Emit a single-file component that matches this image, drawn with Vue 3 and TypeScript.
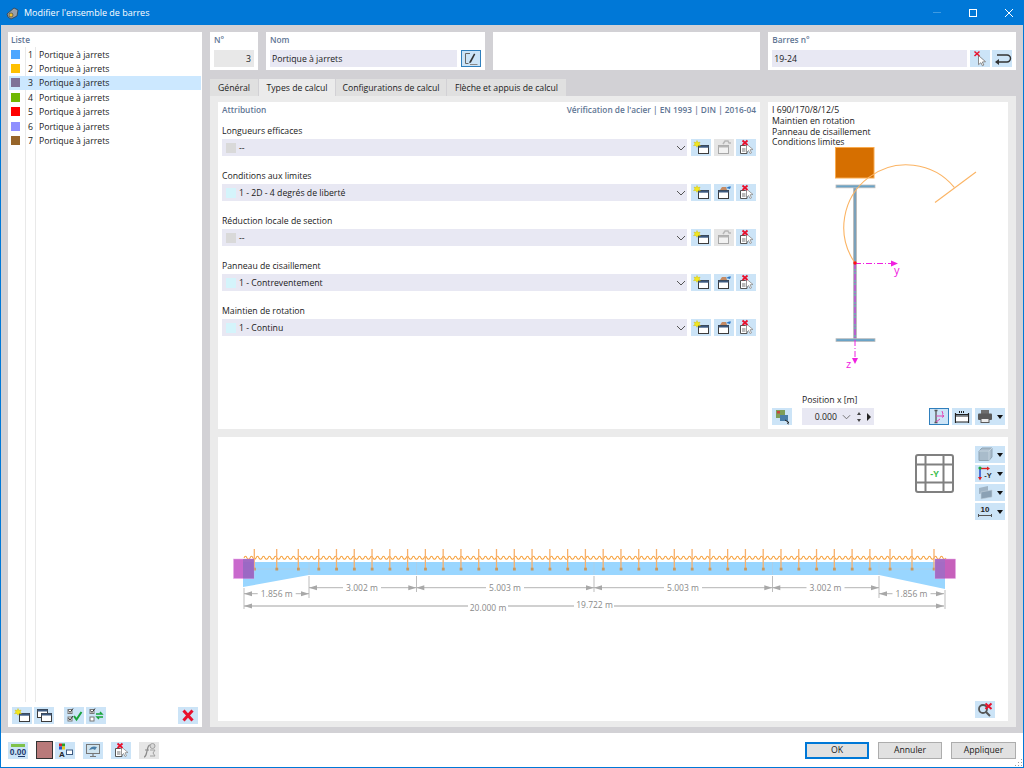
<script setup lang="ts">
// Dialogue RFEM : ensemble de barres
interface AttrRow {
  label: string
  value: string
  empty: boolean
}

const listItems = [
  { id: 1, color: '#4da6ff' },
  { id: 2, color: '#ffc000' },
  { id: 3, color: '#7f7198' },
  { id: 4, color: '#70b800' },
  { id: 5, color: '#ff0000' },
  { id: 6, color: '#8f8fff' },
  { id: 7, color: '#97652a' }
]

const tabs = ['Général', 'Types de calcul', 'Configurations de calcul', 'Flèche et appuis de calcul']

const attrRows: AttrRow[] = [
  { label: 'Longueurs efficaces', value: '--', empty: true },
  { label: 'Conditions aux limites', value: '1 - 2D - 4 degrés de liberté', empty: false },
  { label: 'Réduction locale de section', value: '--', empty: true },
  { label: 'Panneau de cisaillement', value: '1 - Contreventement', empty: false },
  { label: 'Maintien de rotation', value: '1 - Continu', empty: false }
]

// repères verticaux du maintien le long de la barre
const ticks: number[] = [254.3, 276.7, 298.3]
for (let i = 0; i <= 31; i++) ticks.push(318.7 + i * 17.78)
ticks.push(890, 912, 934)

let wave = 'M244 558'
for (let x = 244; x < 942; x += 6) wave += ' q1.5 -3.5 3 0 q1.5 2.6 3 0'

const dims = [
  { x1: 309, x2: 416.3, y: 587.7, t: '3.002 m', tx: 362 },
  { x1: 416.3, x2: 594, y: 587.7, t: '5.003 m', tx: 505 },
  { x1: 594, x2: 772.3, y: 587.7, t: '5.003 m', tx: 683 },
  { x1: 772.3, x2: 879, y: 587.7, t: '3.002 m', tx: 825.5 },
  { x1: 244, x2: 309, y: 593.7, t: '1.856 m', tx: 276.7 },
  { x1: 879, x2: 944, y: 593.7, t: '1.856 m', tx: 911.5 }
]
const plotTools = ['ic-cube', 'ic-axes', 'ic-layers', 'ic-scale']
</script>

<template>
  <div class="win">
    <svg class="sprite" width="0" height="0">
      <defs>
        <symbol id="ic-new" viewBox="0 0 20 17">
          <rect x="7.500" y="6.500" width="10" height="8" fill="#fff" stroke="#3c3c3c" />
          <rect x="7.500" y="6.500" width="10" height="2.200" fill="#3d5a80" />
          <path d="M6 1.500l.9 2.100 2.200-.5-1 1.900 1.400 1.700-2.200-.3L6 8.300 4.800 6.400l-2.300.3 1.500-1.700-1-1.900 2.200.5z" fill="#f4e81c" stroke="#cdb900" stroke-width=".4" />
        </symbol>
        <symbol id="ic-copy-off" viewBox="0 0 20 17">
          <rect x="4.500" y="6.500" width="10" height="8" fill="#f2f2f2" stroke="#a8a8a8" />
          <rect x="4.500" y="6.500" width="10" height="2" fill="#b5b5b5" />
          <path d="M9 5l2-3h3l1 2h2" fill="none" stroke="#b8b8b8" stroke-width="1.500" />
        </symbol>
        <symbol id="ic-copy-on" viewBox="0 0 20 17">
          <rect x="4.500" y="6.500" width="10" height="8" fill="#fff" stroke="#3c3c3c" />
          <rect x="4.500" y="6.500" width="10" height="2" fill="#3d5a80" />
          <path d="M6 6l2-3h4l1 3z" fill="#c58a63" />
          <path d="M12 4l3-1.500 2 0-1 2.500z" fill="#2f78c4" />
        </symbol>
        <symbol id="ic-del" viewBox="0 0 20 17">
          <path d="M4.500 6.500h5l1.500 1.500v6.500H4.500z" fill="#fff" stroke="#555" />
          <path d="M6 10h3.500M6 12h3.500" stroke="#777" />
          <path d="M10.500 5l6.500 5.500-3 .3 1.500 3-1.500.7-1.500-3-2 2z" fill="#fff" stroke="#8a8a8a" stroke-width=".8" />
          <path d="M6.500 1.500l5 4.500M11.500 1.500l-5 4.500" stroke="#e8112d" stroke-width="1.800" />
        </symbol>
        <symbol id="ic-edit" viewBox="0 0 20 17">
          <path d="M9 3.500H4.500v10h3" fill="none" stroke="#666" />
          <path d="M8.500 11.500L13 3.500l1.300.8-4.300 8.200-1.700.8z" fill="#333" />
          <path d="M9 14.500h7.500" stroke="#888" />
        </symbol>
        <symbol id="ic-pick" viewBox="0 0 20 17">
          <path d="M8.500 5.500l7 6.200-3.200.3 1.600 3-1.500.7-1.500-3-2.400 2z" fill="#fff" stroke="#7d7d7d" stroke-width=".9" />
          <path d="M4.500 1.500l5 4.500M9.500 1.500l-5 4.500" stroke="#e8112d" stroke-width="1.500" />
        </symbol>
        <symbol id="ic-return" viewBox="0 0 20 17">
          <path d="M6 12h9a3.500 3.500 0 0 0 0-7H5" fill="none" stroke="#333" stroke-width="1.400" />
          <path d="M7 9l-4 3 4 3z" fill="#333" />
        </symbol>
        <symbol id="ic-copy2" viewBox="0 0 20 17">
          <rect x="3.500" y="2.500" width="10" height="8" fill="#fff" stroke="#3c3c3c" />
          <rect x="3.500" y="2.500" width="10" height="2" fill="#3d5a80" />
          <rect x="7.500" y="6.500" width="10" height="8" fill="#fff" stroke="#3c3c3c" />
          <rect x="7.500" y="6.500" width="10" height="2" fill="#3d5a80" />
        </symbol>
        <symbol id="ic-check" viewBox="0 0 20 17">
          <rect x="4" y="2.500" width="4" height="4" fill="#fff" stroke="#777" />
          <rect x="4" y="10" width="4" height="4" fill="#fff" stroke="#777" />
          <path d="M4.500 3.500l1.500 2 3-4M4.500 11l1.500 2 3-4" fill="none" stroke="#333" />
          <path d="M10 9l2.500 3.500L17.500 5" fill="none" stroke="#19a33b" stroke-width="2" />
        </symbol>
        <symbol id="ic-swap" viewBox="0 0 20 17">
          <rect x="4" y="2.500" width="4" height="4" fill="#fff" stroke="#777" />
          <rect x="4" y="10" width="4" height="4" fill="#fff" stroke="#777" />
          <path d="M4.500 3.500l1.500 2 3-4" fill="none" stroke="#333" />
          <path d="M10 7h6l-2-2M17 10h-6l2 2" fill="none" stroke="#19a33b" stroke-width="1.400" />
        </symbol>
        <symbol id="ic-x" viewBox="0 0 20 17">
          <path d="M5.500 3.500l9 10M14.500 3.500l-9 10" stroke="#e8112d" stroke-width="3" />
        </symbol>
        <symbol id="ic-units" viewBox="0 0 20 17">
          <rect x="3" y="2" width="14" height="3" fill="#7fc24a" />
          <text x="10" y="13" font-size="8.500" font-family="Liberation Sans, sans-serif" text-anchor="middle" fill="#1f3a6e" font-weight="700">0.00</text>
          <path d="M10 14.500h7" stroke="#1f3a6e" />
        </symbol>
        <symbol id="ic-legend" viewBox="0 0 20 17">
          <rect x="4" y="1.500" width="3" height="3" fill="#e02020" />
          <rect x="7" y="1.500" width="3" height="3" fill="#2aa02a" />
          <rect x="4" y="4.500" width="3" height="3" fill="#2050d0" />
          <rect x="7" y="4.500" width="3" height="3" fill="#e8c820" />
          <text x="7" y="15" font-size="8" font-family="Liberation Sans, sans-serif" text-anchor="middle" fill="#222" font-weight="700">A</text>
          <rect x="11.500" y="8" width="6" height="4.500" fill="#fff" stroke="#3d5a80" />
        </symbol>
        <symbol id="ic-screen" viewBox="0 0 20 17">
          <rect x="3.500" y="2.500" width="13" height="9" fill="#cfe3ee" stroke="#777" />
          <path d="M6 8c2-4 5-4 8-3l-2 3-2-1z" fill="#4a7ea8" />
          <path d="M7 14.500h6M10 11.500v3" stroke="#777" stroke-width="1.200" />
        </symbol>
        <symbol id="ic-fx" viewBox="0 0 20 17">
          <path d="M5 15c2 0 2-2 3-6s1-6 3-6" fill="none" stroke="#8a8a8a" stroke-width="1.200" />
          <path d="M6 8h4" stroke="#8a8a8a" />
          <circle cx="13.500" cy="4" r="2.500" fill="#d8d8d8" stroke="#a0a0a0" />
          <path d="M11 8h5l-2 3 2 3h-5" fill="none" stroke="#a0a0a0" />
        </symbol>
        <symbol id="ic-model" viewBox="0 0 20 17">
          <rect x="4" y="2" width="9" height="8" fill="#7e9e58" />
          <rect x="5" y="3" width="3" height="2.500" fill="#c9473b" />
          <rect x="8" y="7" width="8" height="6" fill="#4a7ea8" />
          <path d="M13 12l4 2.500-1.500.4.800 1.400" fill="none" stroke="#222" />
        </symbol>
        <symbol id="ic-section" viewBox="0 0 20 17">
          <path d="M5.500 2.500h3M7 2.500v12M5.500 14.500h3" stroke="#555" stroke-width="1.300" fill="none" />
          <path d="M7 8h8M15 8l-2-1.500M15 8l-2 1.500M13 3l1 3M7 14l4-3" stroke="#e243b4" fill="none" />
        </symbol>
        <symbol id="ic-dim" viewBox="0 0 20 17">
          <path d="M3.500 15V5M16.500 15V5M3.500 6.500h13" stroke="#222" stroke-width="1.200" fill="none" />
          <rect x="3.500" y="8" width="13" height="6" fill="#fff" stroke="#222" />
          <path d="M7 4h6" stroke="#222" stroke-width="2" stroke-dasharray="1 1" />
        </symbol>
        <symbol id="ic-print" viewBox="0 0 20 17">
          <rect x="6" y="2" width="8" height="4" fill="#6e6e6e" />
          <rect x="3" y="5.500" width="14" height="6.500" rx="1" fill="#5a5a5a" />
          <rect x="6" y="10.500" width="8" height="4" fill="#ececec" stroke="#5a5a5a" />
        </symbol>
        <symbol id="ic-cube" viewBox="0 0 20 17">
          <path d="M4 5l3-3h10v9l-3 3.500H4z" fill="#a9bccb" stroke="#8fa3b3" />
          <path d="M4 5h10v9.500M14 5l3-3" fill="none" stroke="#c6d5e0" />
        </symbol>
        <symbol id="ic-axes" viewBox="0 0 20 17">
          <path d="M5 3.500h7" stroke="#e02020" stroke-width="1.400" />
          <path d="M5 3.500v9" stroke="#1a40c8" stroke-width="1.400" />
          <circle cx="5" cy="3" r="1.600" fill="#1da83a" />
          <path d="M12 1.500l3 2-3 2zM3 12h4l-2 3.500z" fill="#e02020" />
          <text x="13" y="13" font-size="7.500" font-family="Liberation Sans, sans-serif" font-weight="700" text-anchor="middle" fill="#333">-Y</text>
        </symbol>
        <symbol id="ic-layers" viewBox="0 0 20 17">
          <path d="M4 4l9-2v6l-9 2z" fill="#9fb3c4" />
          <path d="M6 8l11-2v7l-11 2z" fill="#8ba1b4" stroke="#c2d0db" stroke-width=".6" />
        </symbol>
        <symbol id="ic-scale" viewBox="0 0 20 17">
          <text x="10" y="9" font-size="8" font-family="Liberation Sans, sans-serif" font-weight="700" text-anchor="middle" fill="#222">10</text>
          <path d="M3.500 14v-3M16.500 14v-3M3.500 12.500h13" stroke="#555" fill="none" />
        </symbol>
        <symbol id="ic-zoom" viewBox="0 0 20 17">
          <circle cx="8" cy="8" r="4" fill="none" stroke="#555" stroke-width="1.800" />
          <path d="M11 11l4 4" stroke="#555" stroke-width="2" />
          <path d="M10.500 2.500l6 5.500M16.500 2.500l-6 5.500" stroke="#e8112d" stroke-width="2" />
        </symbol>
      </defs>
    </svg>

    <header class="titlebar">
      <svg class="app-ico" viewBox="0 0 14 14" width="14" height="14">
        <path d="M1 8l7-6 4 2-1 6-6 3-3-2z" fill="#9aa0a8" stroke="#333" stroke-width=".7" />
        <circle cx="5" cy="9" r="2" fill="#f2c230" stroke="#333" stroke-width=".6" />
      </svg>
      <span class="title">Modifier l'ensemble de barres</span>
      <div class="win-ctrl">
        <svg viewBox="0 0 10 10" width="10" height="10"><path d="M1 4.500h8" stroke="#3f9be2" /></svg>
        <svg viewBox="0 0 10 10" width="10" height="10"><rect x="1.500" y="1.500" width="7" height="7" fill="none" stroke="#fff" /></svg>
        <svg viewBox="0 0 10 10" width="10" height="10"><path d="M1 1l8 8M9 1l-8 8" stroke="#fff" /></svg>
      </div>
    </header>

    <div class="body">
      <aside class="list-panel">
        <div class="head list-head">Liste</div>
        <div class="list">
          <div v-for="item in listItems" :key="item.id" class="list-row" :class="{ sel: item.id === 3 }">
            <span class="swatch" :style="{ background: item.color }"></span>
            <span class="num">{{ item.id }}</span>
            <span class="row-name">Portique à jarrets</span>
          </div>
        </div>
        <div class="list-tools">
          <button class="tb"><svg><use href="#ic-new" /></svg></button>
          <button class="tb"><svg><use href="#ic-copy2" /></svg></button>
          <button class="tb ml"><svg><use href="#ic-check" /></svg></button>
          <button class="tb"><svg><use href="#ic-swap" /></svg></button>
          <button class="tb push"><svg><use href="#ic-x" /></svg></button>
        </div>
      </aside>

      <main class="main">
        <div class="top-row">
          <section class="card c-num">
            <div class="head">N°</div>
            <div class="field grey right">3</div>
          </section>
          <section class="card c-name">
            <div class="head">Nom</div>
            <div class="line">
              <div class="field grow">Portique à jarrets</div>
              <button class="tb active"><svg><use href="#ic-edit" /></svg></button>
            </div>
          </section>
          <section class="card c-blank"></section>
          <section class="card c-bars">
            <div class="head">Barres n°</div>
            <div class="line">
              <div class="field grow">19-24</div>
              <button class="tb"><svg><use href="#ic-pick" /></svg></button>
              <button class="tb"><svg><use href="#ic-return" /></svg></button>
            </div>
          </section>
        </div>

        <nav class="tabs">
          <div v-for="(t, i) in tabs" :key="t" class="tab" :class="{ on: i === 1 }">{{ t }}</div>
        </nav>

        <div class="tab-body">
          <section class="attr">
            <div class="attr-head head">
              <span>Attribution</span>
              <span>Vérification de l'acier | EN 1993 | DIN | 2016-04</span>
            </div>
            <div v-for="row in attrRows" :key="row.label" class="attr-row">
              <div class="attr-label">{{ row.label }}</div>
              <div class="line">
                <div class="field grow select">
                  <span class="mini" :class="{ none: row.empty }"></span>
                  <span class="grow">{{ row.value }}</span>
                  <svg class="chev" viewBox="0 0 10 6" width="10" height="6"><path d="M1 1l4 4 4-4" fill="none" stroke="#555" /></svg>
                </div>
                <button class="tb"><svg><use href="#ic-new" /></svg></button>
                <button class="tb" :class="{ off: row.empty }"><svg><use :href="row.empty ? '#ic-copy-off' : '#ic-copy-on'" /></svg></button>
                <button class="tb"><svg><use href="#ic-del" /></svg></button>
              </div>
            </div>
          </section>

          <section class="preview">
            <svg class="preview-draw" viewBox="768 102 240 327">
              <rect x="835.500" y="147.500" width="38.500" height="30.500" fill="#d66f00" stroke="#f9ab4e" />
              <rect x="853.200" y="187" width="3.600" height="152" fill="#adadad" />
              <rect x="854.200" y="187" width="1.600" height="152" fill="#6f9fbd" />
              <rect x="836" y="185" width="39" height="2.800" fill="#6aa3c6" stroke="#bdbdbd" stroke-width=".8" />
              <rect x="836" y="338.700" width="39" height="2.800" fill="#6aa3c6" stroke="#bdbdbd" stroke-width=".8" />
              <path d="M854.500 262.300A62.500 62.500 0 0 1 954.300 187.300" fill="none" stroke="#fbb464" stroke-width="1.100" />
              <path d="M935 202.500L976 172" stroke="#fbb464" stroke-width="1.100" />
              <path d="M855 263.500H893" stroke="#f020e0" stroke-dasharray="6 2 1 2" />
              <path d="M891 260.500l7 3-7 3z" fill="#f020e0" />
              <path d="M855 263V358" stroke="#f020e0" stroke-dasharray="6 2 1 2" />
              <path d="M852 358h6l-3 6z" fill="#f020e0" />
              <circle cx="855" cy="263" r="1.700" fill="#ff1010" />
              <text x="894" y="274" class="axis-t">y</text>
              <text x="846" y="368" class="axis-t">z</text>
            </svg>
            <div class="preview-text">
              <div>I 690/170/8/12/5</div>
              <div>Maintien en rotation</div>
              <div>Panneau de cisaillement</div>
              <div>Conditions limites</div>
            </div>
            <div class="preview-foot">
              <button class="tb"><svg><use href="#ic-model" /></svg></button>
              <div class="pos">
                <div class="pos-label">Position x [m]</div>
                <div class="pos-field">
                  <span class="pos-val">0.000</span>
                  <svg viewBox="0 0 10 6" width="9" height="6"><path d="M1 1l4 4 4-4" fill="none" stroke="#666" /></svg>
                  <svg viewBox="0 0 6 12" width="6" height="12"><path d="M3 1l2 3H1zM3 11l2-3H1z" fill="#444" /></svg>
                  <svg viewBox="0 0 4 8" width="4" height="8"><path d="M0 0l4 4-4 4z" fill="#222" /></svg>
                </div>
              </div>
              <div class="foot-tools">
                <button class="tb active"><svg><use href="#ic-section" /></svg></button>
                <button class="tb"><svg><use href="#ic-dim" /></svg></button>
                <button class="tb drop"><svg><use href="#ic-print" /></svg><i class="caret"></i></button>
              </div>
            </div>
          </section>

          <section class="plot">
            <svg class="plot-draw" viewBox="218 437 790 284">
              <!-- barre -->
              <path d="M243 562H945V589L879 575H309L243 587z" fill="#99d6ff" />
              <path d="M243 569H310M880 569H945M309 562V575M416.500 562V575M594 562V575M772.500 562V575M879 562V575" stroke="#b9c9d6" stroke-width=".5" />
              <!-- maintien continu -->
              <path :d="wave" fill="none" stroke="#f6a03a" stroke-width="1.100" />
              <g v-for="x in ticks" :key="x">
                <path :d="`M${x} 549V569`" stroke="#f8b06a" stroke-width="1.300" />
                <rect :x="x - 1.300" y="567.700" width="2.800" height="2.800" fill="#c9985f" />
              </g>
              <!-- appuis -->
              <rect x="233.500" y="559" width="20.500" height="19.500" fill="#c04fc4" fill-opacity=".85" stroke="#e8a8e8" stroke-width=".5" />
              <rect x="243" y="559" width="11" height="19.500" fill="#8f6cc0" fill-opacity=".7" />
              <rect x="935" y="559" width="20.500" height="19.500" fill="#c04fb4" fill-opacity=".9" stroke="#e8a8e8" stroke-width=".5" />
              <rect x="935" y="559" width="10" height="19.500" fill="#9a72c8" fill-opacity=".7" />
              <!-- cotes -->
              <g class="dim">
                <path d="M244 588V609M945 590V609M309 576V598M416.500 576V592M594 576V592M772.500 576V592M879 576V598" stroke="#bdbdbd" fill="none" />
                <g v-for="d in dims" :key="d.tx">
                  <path :d="`M${d.x1} ${d.y}H${d.x2}`" stroke="#b4b4b4" />
                  <path :d="`M${d.x1} ${d.y}l8 -2.500v5zM${d.x2} ${d.y}l-8 -2.500v5z`" fill="#a8a8a8" />
                  <rect :x="d.tx - 19" :y="d.y - 5" width="38" height="10" fill="#fff" />
                  <text :x="d.tx" :y="d.y + 3" text-anchor="middle" class="dim-t">{{ d.t }}</text>
                </g>
                <path d="M244 606H944" stroke="#c0c0c0" stroke-width="1.500" />
                <path d="M244 606l8 -2.500v5zM944 606l-8 -2.500v5z" fill="#a8a8a8" />
                <rect x="468" y="601" width="40" height="12" fill="#fff" />
                <rect x="574" y="600" width="40" height="10" fill="#fff" />
                <text x="488" y="611" text-anchor="middle" class="dim-t">20.000 m</text>
                <text x="594.500" y="608" text-anchor="middle" class="dim-t">19.722 m</text>
              </g>
              <!-- cube de vue -->
              <g fill="none" stroke="#808080" stroke-width="2">
                <rect x="916" y="455" width="37" height="37" rx="2" />
                <path d="M925.500 455V492M943.500 455V492M916 464.500H953M916 482.500H953" />
              </g>
              <text x="934.500" y="477" text-anchor="middle" class="cube-t">-Y</text>
            </svg>
            <div class="plot-tools">
              <button v-for="t in plotTools" :key="t" class="tb drop"><svg><use :href="`#${t}`" /></svg><i class="caret"></i></button>
            </div>
            <button class="tb zoom-off"><svg><use href="#ic-zoom" /></svg></button>
          </section>
        </div>
      </main>
    </div>

    <footer class="foot">
      <button class="tb"><svg><use href="#ic-units" /></svg></button>
      <span class="color-box"></span>
      <button class="tb tight"><svg><use href="#ic-legend" /></svg></button>
      <button class="tb sp"><svg><use href="#ic-screen" /></svg></button>
      <button class="tb sp"><svg><use href="#ic-del" /></svg></button>
      <button class="tb sp off"><svg><use href="#ic-fx" /></svg></button>
      <div class="actions">
        <button class="btn primary">OK</button>
        <button class="btn">Annuler</button>
        <button class="btn">Appliquer</button>
      </div>
      <svg class="grip" viewBox="0 0 10 10" width="10" height="10">
        <path d="M8 2h1v1H8zM5 5h1v1H5zM8 5h1v1H8zM2 8h1v1H2zM5 8h1v1H5zM8 8h1v1H8z" fill="#9a9a9a" />
      </svg>
    </footer>
  </div>
</template>

<style scoped>
.win {
  position: relative;
  width: 1024px;
  height: 768px;
  box-sizing: border-box;
  display: flex;
  flex-direction: column;
  border: 1px solid #0078d7;
  border-top: 0;
  background: #fff;
  font-family: "Open Sans", "Noto Sans", sans-serif;
  font-size: 8.700px;
  color: #1a1a1a;
  overflow: hidden;
}
.sprite { position: absolute; }

.titlebar {
  height: 25px;
  flex: none;
  display: flex;
  align-items: center;
  background: #0078d7;
  color: #fff;
}
.app-ico { margin: 0 4px 0 5px; }
.title { font-size: 9px; }
.win-ctrl {
  margin-left: auto;
  display: flex;
  gap: 26px;
  padding-right: 9px;
}

.body {
  height: 708px;
  flex: none;
  box-sizing: border-box;
  display: flex;
  gap: 8px;
  padding: 7px 7px 6px;
  background: #d2d1d5;
}

.list-panel {
  width: 194px;
  flex: none;
  display: flex;
  flex-direction: column;
  background: #fff;
}
.head {
  font-size: 8.300px;
  font-weight: 600;
  color: #5f7694;
  line-height: 12px;
}
.list-head { padding: 2px 3px 1px; }
.list {
  flex: 1;
  margin: 0 1px;
  background:
    linear-gradient(#e9e9e9, #e9e9e9) 16px 0 / 1px 100% no-repeat,
    linear-gradient(#e9e9e9, #e9e9e9) 26px 0 / 1px 100% no-repeat;
}
.list-row {
  height: 14.400px;
  display: flex;
  align-items: center;
  white-space: nowrap;
}
.list-row.sel { background: #cce8ff; }
.swatch { width: 9px; height: 9px; margin: 0 5px 0 2px; }
.num { width: 8px; margin-right: 6px; padding-top: 1px; text-align: right; }
.row-name { padding-top: 1px; }
.list-tools {
  display: flex;
  gap: 2px;
  padding: 5px 4px 3px;
}
.ml { margin-left: 8px; }
.push { margin-left: auto; }

.main {
  flex: 1;
  min-width: 0;
  display: flex;
  flex-direction: column;
}
.top-row {
  height: 38px;
  flex: none;
  display: flex;
  gap: 8px;
}
.card { background: #fff; padding: 1px 4px 0; box-sizing: border-box; }
.card .head { height: 17px; line-height: 14px; }
.c-num { width: 48px; }
.c-name { width: 219px; }
.c-name .line { gap: 4px; }
.c-blank { width: 268px; }
.c-bars { width: 248px; }
.c-bars .tb + .tb { margin-left: -1px; }

.line { display: flex; gap: 3px; align-items: center; }
.grow { flex: 1; min-width: 0; }
.field {
  height: 17px;
  line-height: 18px;
  padding: 0 2px;
  box-sizing: border-box;
  background: #e8e8f3;
}
.field.grey { background: #e8e8e8; }
.field.right { text-align: right; padding-right: 3px; }

.tb {
  width: 20px;
  height: 17px;
  flex: none;
  padding: 0;
  border: 0;
  display: inline-flex;
  background: #cce4f7;
}
.tb svg { width: 20px; height: 17px; display: block; }
.tb.active { box-shadow: inset 0 0 0 1px #2f7fbd; }
.tb.off { background: #e6e6e6; }
.tb.drop { width: 30px; align-items: center; }
.caret {
  width: 0;
  height: 0;
  margin-left: 2px;
  border: 3.500px solid transparent;
  border-top: 4px solid #111;
  border-bottom: 0;
}

.tabs {
  height: 17px;
  flex: none;
  margin-top: 9px;
  display: flex;
  gap: 1px;
}
.tab {
  line-height: 18px;
  box-sizing: border-box;
  background: #e0e0e0;
  text-align: center;
  white-space: nowrap;
}
.tab:nth-child(1) { width: 48px; }
.tab:nth-child(2) { width: 76px; }
.tab:nth-child(3) { width: 110px; }
.tab:nth-child(4) { width: 119px; }
.tab.on { background: #ebebeb; }

.tab-body {
  flex: 1;
  min-height: 0;
  display: grid;
  grid-template-columns: 542px 240px;
  grid-template-rows: 327px 284px;
  gap: 8px;
  padding: 6px 8px;
  background: #ebebeb;
}

.attr { background: #fff; padding: 2px 4px; }
.attr-head {
  display: flex;
  justify-content: space-between;
  margin-bottom: 8px;
}
.attr-row { margin-bottom: 13px; }
.attr-label { line-height: 14px; margin-bottom: 1px; }
.select { display: flex; align-items: center; padding: 0 1px 0 4px; margin-right: 1px; }
.mini { width: 10px; height: 10px; margin-right: 3px; background: #d4f4fb; }
.mini.none { background: #d9d9d9; }
.attr-row .tb + .tb { margin-left: -0.500px; }

.preview {
  position: relative;
  background: #fff;
  display: flex;
  flex-direction: column;
  padding: 3px 3px 4px 4px;
}
.preview-draw {
  position: absolute;
  left: 0;
  top: 0;
  width: 240px;
  height: 327px;
}
.preview-text { position: relative; line-height: 10.800px; }
.axis-t { font-size: 11px; fill: #f020e0; font-family: "Open Sans", sans-serif; }
.preview-foot {
  position: relative;
  margin-top: auto;
  display: flex;
  align-items: flex-end;
}
.pos { margin-left: 10px; }
.pos-label { line-height: 14px; margin-bottom: 1px; }
.pos-field {
  width: 72px;
  height: 17px;
  display: flex;
  align-items: center;
  gap: 5px;
  background: #e8e8f3;
}
.pos-val { width: 35px; text-align: right; }
.foot-tools {
  margin-left: auto;
  display: flex;
  gap: 3px;
}

.plot { position: relative; grid-column: 1 / 3; background: #fff; }
.plot-draw { display: block; width: 790px; height: 284px; }
.dim-t { font-size: 8.500px; fill: #8a8a8a; font-family: "Open Sans", sans-serif; }
.cube-t { font-size: 9px; font-weight: 700; fill: #3fbf4f; font-family: "Open Sans", sans-serif; }
.plot-tools {
  position: absolute;
  top: 9px;
  right: 3px;
  display: flex;
  flex-direction: column;
  gap: 2px;
}
.zoom-off { position: absolute; right: 13px; bottom: 3px; }

.foot {
  position: relative;
  flex: none;
  height: 34px;
  display: flex;
  align-items: center;
  padding: 0 7px 0;
}
.color-box {
  width: 17px;
  height: 18px;
  margin-left: 8px;
  box-sizing: border-box;
  border: 1px solid #333;
  background: #b97a7a;
}
.tight { margin-left: 2px; }
.sp { margin-left: 8px; }
.actions { margin-left: auto; margin-top: 1px; display: flex; gap: 9px; }
.btn {
  width: 64px;
  height: 17px;
  padding: 0;
  border: 1px solid #adadad;
  background: #e1e1e1;
  color: #1a1a1a;
  font: inherit;
  line-height: 15px;
}
.btn:last-child { width: 65px; }
.primary { border: 2px solid #0078d7; line-height: 13px; }
.grip { position: absolute; right: 0; bottom: 0; }
</style>

<style>
html, body { margin: 0; background: #fff; }
</style>
